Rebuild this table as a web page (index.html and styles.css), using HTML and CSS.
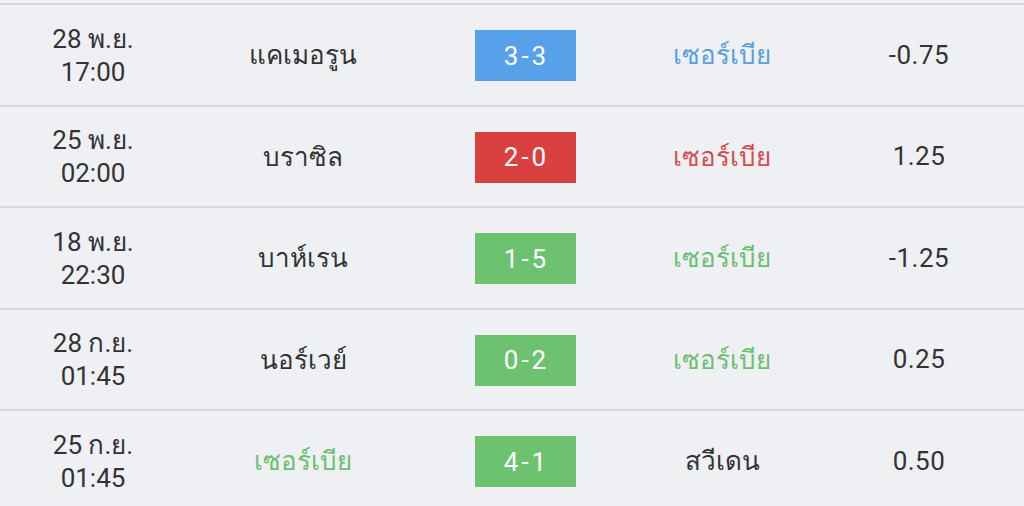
FILE: index.html
```html
<!DOCTYPE html>
<html lang="th">
<head>
<meta charset="utf-8">
<link rel="stylesheet" href="styles.css">
</head>
<body>
<div class="table">
  <div class="row">
    <div class="date">28 พ.ย.<br>17:00</div>
    <div class="team">แคเมอรูน</div>
    <div class="score-cell"><span class="score blue">3-3</span></div>
    <div class="team t-blue">เซอร์เบีย</div>
    <div class="hdp">-0.75</div>
  </div>
  <div class="row">
    <div class="date">25 พ.ย.<br>02:00</div>
    <div class="team">บราซิล</div>
    <div class="score-cell"><span class="score red">2-0</span></div>
    <div class="team t-red">เซอร์เบีย</div>
    <div class="hdp">1.25</div>
  </div>
  <div class="row">
    <div class="date">18 พ.ย.<br>22:30</div>
    <div class="team">บาห์เรน</div>
    <div class="score-cell"><span class="score green">1-5</span></div>
    <div class="team t-green">เซอร์เบีย</div>
    <div class="hdp">-1.25</div>
  </div>
  <div class="row">
    <div class="date">28 ก.ย.<br>01:45</div>
    <div class="team">นอร์เวย์</div>
    <div class="score-cell"><span class="score green">0-2</span></div>
    <div class="team t-green">เซอร์เบีย</div>
    <div class="hdp">0.25</div>
  </div>
  <div class="row">
    <div class="date">25 ก.ย.<br>01:45</div>
    <div class="team t-green">เซอร์เบีย</div>
    <div class="score-cell"><span class="score green">4-1</span></div>
    <div class="team">สวีเดน</div>
    <div class="hdp">0.50</div>
  </div>
</div>
</body>
</html>
```

FILE: styles.css
```css
html, body {
  margin: 0;
  padding: 0;
  background: #eff0f4;
}
body {
  font-family: Roboto, "Noto Sans", sans-serif;
  color: #333333;
  overflow: hidden;
}
.table {
  padding-top: 3px;
}
.row {
  display: grid;
  grid-template-columns: 186px 234px 210px 184px 210px;
  align-items: center;
  height: 101.5px;
  box-sizing: border-box;
  border-top: 2px solid #d6d6da;
}
.row > div {
  text-align: center;
}
.date {
  font-size: 26px;
  line-height: 33px;
  padding-top: 2px;
}
.team {
  font-size: 26px;
}
.hdp {
  font-size: 26px;
  letter-spacing: 0.5px;
}
.score-cell {
  display: flex;
  justify-content: center;
  padding-top: 2px;
}
.score {
  display: flex;
  align-items: center;
  justify-content: center;
  box-sizing: border-box;
  width: 101px;
  height: 51px;
  padding-left: 3px;
  color: #ffffff;
  font-size: 26px;
  letter-spacing: 3px;
}
.blue { background: #57a0ea; }
.red { background: #d94141; }
.green { background: #6cc26f; }
.t-blue { color: #5a9fde; }
.t-red { color: #d54d4d; }
.t-green { color: #6cbf6e; }
```
